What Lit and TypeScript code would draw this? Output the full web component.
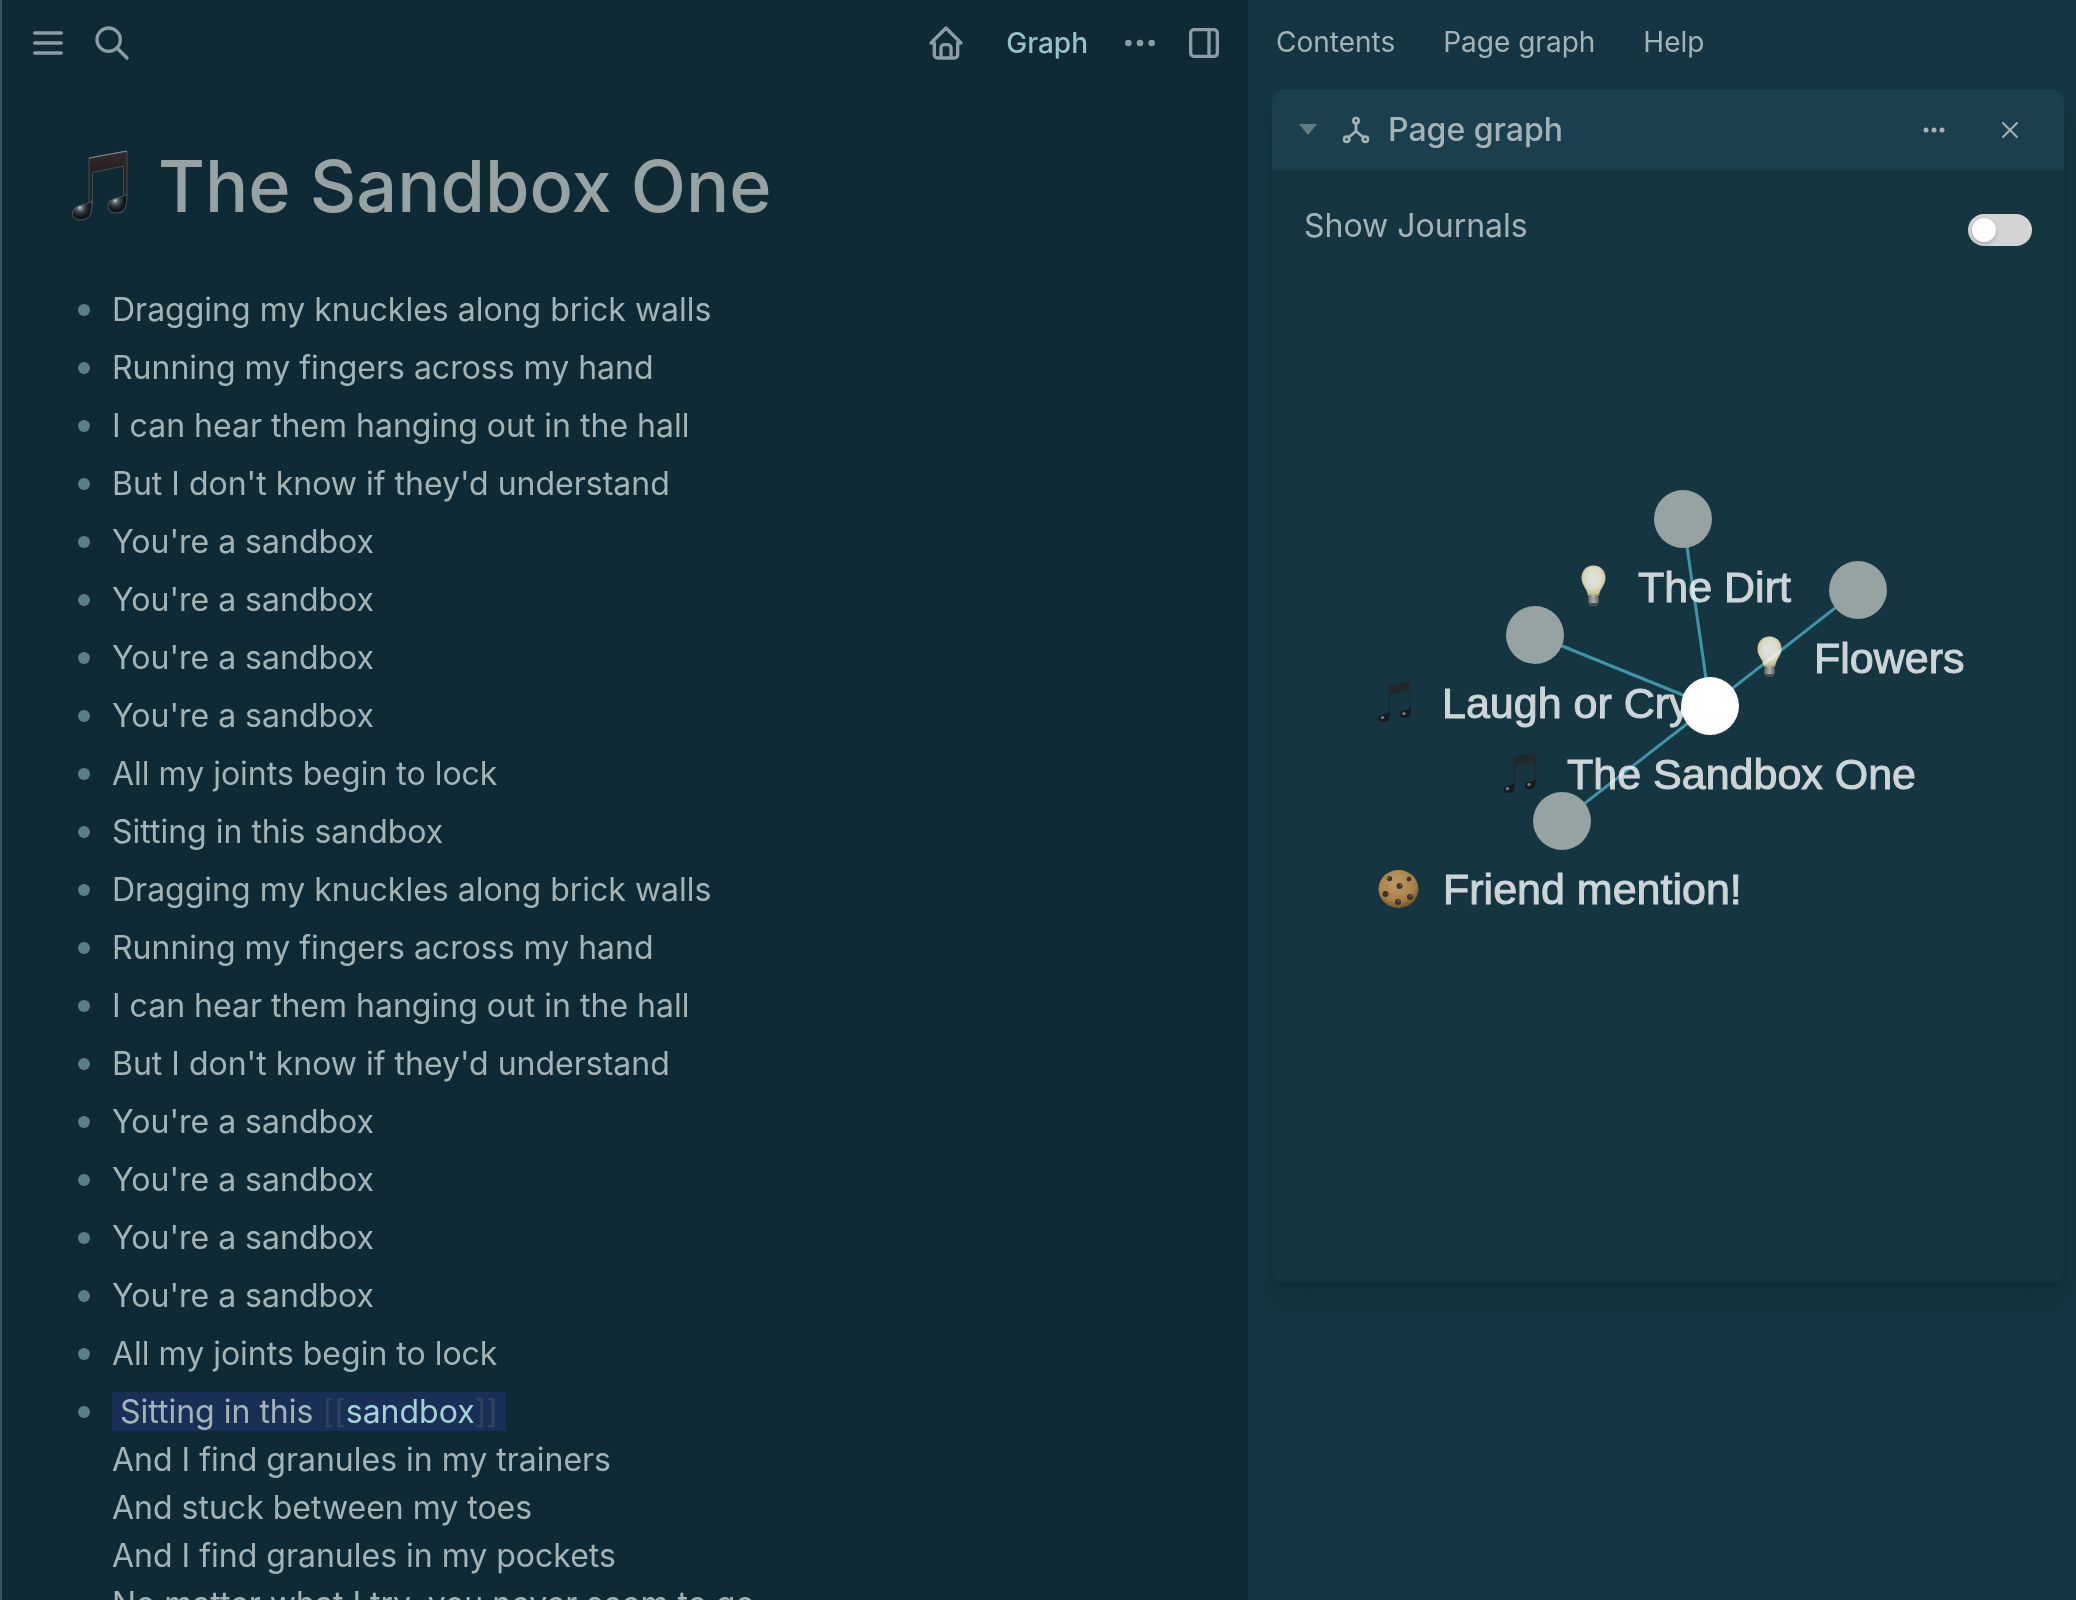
import { LitElement, html, svg, css } from "lit";
import { customElement } from "lit/decorators.js";

const VERSE = [
  "Dragging my knuckles along brick walls",
  "Running my fingers across my hand",
  "I can hear them hanging out in the hall",
  "But I don't know if they'd understand",
  "You're a sandbox",
  "You're a sandbox",
  "You're a sandbox",
  "You're a sandbox",
  "All my joints begin to lock",
];

const BLOCKS = [...VERSE, "Sitting in this sandbox", ...VERSE];

type Kind = "note" | "bulb" | "cookie";
interface GraphNode { x: number; y: number; label: string; textX: number; kind: Kind; current?: boolean }

/* Node centres and label starts, in graph-canvas units. */
const NODES: GraphNode[] = [
  { x: 411, y: 251, label: "The Dirt", textX: 366, kind: "bulb" },
  { x: 586, y: 322, label: "Flowers", textX: 542, kind: "bulb" },
  { x: 263, y: 367, label: "Laugh or Cry", textX: 170, kind: "note" },
  { x: 290, y: 553, label: "Friend mention!", textX: 171, kind: "cookie" },
  { x: 438, y: 438, label: "The Sandbox One", textX: 295, kind: "note", current: true },
];

const noteShape = () => svg`
  <defs>
    <linearGradient id="beam" x1="0" y1="0" x2="0" y2="1">
      <stop offset="0" stop-color="#382d2d"/><stop offset="0.3" stop-color="#2a2022"/><stop offset="1" stop-color="#262225"/>
    </linearGradient>
    <radialGradient id="head" cx="0.38" cy="0.35" r="0.7">
      <stop offset="0" stop-color="#d4dfe6"/><stop offset="0.16" stop-color="#6b7a84"/>
      <stop offset="0.45" stop-color="#2c333a"/><stop offset="0.75" stop-color="#121416"/><stop offset="1" stop-color="#1d2226"/>
    </radialGradient>
  </defs>
  <path d="M17 8 L55 1 V46 H51.500 V16 L20.500 22.500 V54 H17 Z" fill="url(#beam)" stroke="#43525c" stroke-width="0.900"/>
  <path d="M17 8 L55 1" stroke="#8a8a8d" stroke-width="1.200"/>
  <path d="M20 51 C20 66 17 70 8 70 C3 70 0.500 67 0.500 63 C0.500 54 14 56 20 51 Z" fill="url(#head)" stroke="#4d5c66" stroke-width="0.900"/>
  <path d="M55 44 C55 59 52 63 44 63 C39 63 36 60 36 56 C36 47 49 49 55 44 Z" fill="url(#head)" stroke="#4d5c66" stroke-width="0.900"/>`;

const smallNoteShape = () => svg`
  <path d="M10.500 5 L32.500 0.500 V28 H31 V9.500 L12 13.500 V33 H10.500 Z" fill="#22272b"/>
  <path d="M12 31 C12 39 10 41 5 41 C2 41 0.500 39.500 0.500 37.500 C0.500 33 8 34 12 31 Z" fill="#171b1e"/>
  <path d="M33 27 C33 35 31 37 26.500 37 C23.500 37 22 35.500 22 33.500 C22 29 29 30 33 27 Z" fill="#171b1e"/>
  <circle cx="4.500" cy="36.500" r="1.600" fill="#74838c"/><circle cx="26" cy="32.500" r="1.600" fill="#74838c"/>`;

const bulbShape = () => svg`
  <defs>
    <radialGradient id="glass" cx="0.5" cy="0.42" r="0.6">
      <stop offset="0" stop-color="#dde2e2"/><stop offset="0.55" stop-color="#dadcc9"/><stop offset="0.85" stop-color="#c9c48d"/><stop offset="1" stop-color="#a39d66"/>
    </radialGradient>
    <linearGradient id="cap" x1="0" x2="1">
      <stop offset="0" stop-color="#5f6668"/><stop offset="0.5" stop-color="#b0b4b5"/><stop offset="1" stop-color="#5a6164"/>
    </linearGradient>
  </defs>
  <path d="M12.500 0.500 C5 0.500 0.500 6 0.500 13 C0.500 20 6 23 7 31 H18 C19 23 24.500 20 24.500 13 C24.500 6 20 0.500 12.500 0.500 Z" fill="url(#glass)"/>
  <path d="M7.500 30.500 H17.500 V38 L15 41 H10 L7.500 38 Z" fill="url(#cap)"/>
  <path d="M8 38 H17 L15 41 H10 Z" fill="#4b4f50"/>
  <path d="M7.500 33.500 H17.500 M7.500 36 H17.500" stroke="#868c8e" stroke-width="0.700"/>`;

const cookieShape = () => svg`
  <defs>
    <radialGradient id="dough" cx="0.45" cy="0.35" r="0.65">
      <stop offset="0" stop-color="#bd9a66"/><stop offset="0.7" stop-color="#a98149"/><stop offset="1" stop-color="#76552a"/>
    </radialGradient>
  </defs>
  <ellipse cx="20.500" cy="19" rx="20" ry="19" fill="url(#dough)"/>
  <g fill="#3f302b">
    <circle cx="11.500" cy="8.500" r="2.600"/><circle cx="31" cy="9" r="2.400"/><circle cx="21.500" cy="16" r="3"/>
    <circle cx="7.500" cy="24" r="3"/><circle cx="32" cy="27" r="3"/><circle cx="20" cy="32" r="3"/>
  </g>
  <g fill="#76685f">
    <circle cx="10.500" cy="8" r="1"/><circle cx="22.500" cy="15" r="1"/><circle cx="32.500" cy="26" r="1"/><circle cx="20.500" cy="31" r="1"/>
  </g>`;

const emoji = (n: GraphNode) => {
  const y = n.y + 83;
  if (n.kind === "bulb") return svg`<g transform="translate(${n.textX - 57} ${y - 37})">${bulbShape()}</g>`;
  if (n.kind === "note") return svg`<g transform="translate(${n.textX - 64} ${y - 37})">${smallNoteShape()}</g>`;
  return svg`<g transform="translate(${n.textX - 65} ${y - 34})">${cookieShape()}</g>`;
};

@customElement("page-graph")
export class PageGraph extends LitElement {
  static styles = css`
    :host { display: block; }
    .canvas { display: block; width: 100%; height: auto; background: #153541; }
    .label { font-family: "Liberation Sans", Arial, sans-serif; font-size: 43px; fill: #cdd5d8; stroke: #cdd5d8; stroke-width: 1px; }
    .edge { stroke: #2e788a; stroke-width: 3px; mix-blend-mode: screen; }
    .node { fill: #97a3a3; }
    .current { fill: #ffffff; }
  `;

  render() {
    const hub = NODES[4];
    return html`
      <svg class="canvas" viewBox="0 0 792 1014" role="img" aria-label="Page graph">
        ${NODES.map((n) => svg`${emoji(n)}<text class="label" x=${n.textX} y=${n.y + 83}>${n.label}</text>`)}
        ${NODES.slice(0, 4).map((n) => svg`<line class="edge" x1=${n.x} y1=${n.y} x2=${hub.x} y2=${hub.y}></line>`)}
        ${NODES.map((n) => svg`<circle class="node ${n.current ? "current" : ""}" cx=${n.x} cy=${n.y} r="29"></circle>`)}
      </svg>`;
  }
}

@customElement("app-root")
export class AppRoot extends LitElement {
  static styles = css`
    :host {
      display: block;
      font-family: Inter, sans-serif;
      font-optical-sizing: none;
      color: #a4b3b5;
      background: #0f2a35;
    }
    * { box-sizing: border-box; }
    .app { display: grid; grid-template-columns: 104fr 69fr; height: 100vh; overflow: hidden; }
    .main { border-left: 2px solid #3c545d; overflow: hidden; }
    button { font: inherit; color: inherit; background: none; border: 0; padding: 0; margin: 0; cursor: pointer; }
    a { color: inherit; text-decoration: none; }
    .icon { display: block; fill: none; stroke: currentColor; stroke-width: 2; stroke-linecap: round; stroke-linejoin: round; }
    .toolbar { display: flex; align-items: center; justify-content: space-between; height: 86px; padding: 0 24px 0 26px; color: #8b9ca5; }
    .group { display: flex; align-items: center; gap: 24px; }
    .graph-link { font-size: 28px; line-height: 36px; font-weight: 500; color: #97c3c8; padding: 0 8px 0 16px; }
    .page { padding: 50px 48px 0 70px; }
    .title { display: flex; align-items: center; gap: 28px; margin: 0; font-size: 72px; line-height: 100px; font-weight: 500; color: #97a3a3; }
    .title-icon { display: block; flex: none; }
    .blocks { list-style: none; margin: 45px 0 0; padding: 0; font-size: 32px; line-height: 48px; }
    .block { display: grid; grid-template-columns: 40px 1fr; padding: 5px 0; }
    .dot { width: 12px; height: 12px; border-radius: 50%; background: #5c7f86; margin: 18px 0 0 6px; }
    .mark { background: #1a2f56; padding: 0 8px; color: #a4b3b5; }
    .bracket { color: #30425f; }
    .ref { color: #a3d2d6; }
    .side { background: #153542; padding: 0 12px 0 24px; }
    .tabs { display: flex; align-items: center; gap: 48px; height: 90px; padding-left: 4px; font-size: 28px; line-height: 36px; padding-bottom: 6px; }
    .card { border-radius: 12px; background: #153541; box-shadow: 0 20px 30px -6px rgba(10, 28, 36, 0.2), 0 8px 12px -6px rgba(10, 28, 36, 0.2); overflow: hidden; }
    .card-head { display: flex; align-items: center; height: 80px; padding: 0 40px 0 26px; background: #1c3f4e; }
    .card-title { flex: 1; margin: 0 0 0 16px; font-size: 32px; line-height: 40px; font-weight: 500; }
    .caret { margin-right: 22px; color: #5f7d84; }
    .caret-shape { display: block; fill: currentColor; }
    .close { margin-left: 48px; }
    .setting { display: flex; align-items: center; justify-content: space-between; height: 98px; padding: 14px 32px 0; font-size: 32px; line-height: 48px; }
    .toggle { appearance: none; width: 64px; height: 32px; margin: 8px 0 0; border-radius: 16px; background: #d4d4d4; display: flex; align-items: center; padding: 0 4px; cursor: pointer; }
    .toggle::before { content: ""; width: 24px; height: 24px; border-radius: 50%; background: #ffffff; box-shadow: 0 2px 4px rgba(0, 0, 0, 0.2); }
    .toggle:checked { justify-content: flex-end; background: #3f94a8; }
  `;

  render() {
    return html`
      <div class="app">
        <main class="main">
          <header class="toolbar">
            <div class="group">
              <button aria-label="Menu">
                <svg class="icon" width="40" height="40" viewBox="0 0 24 24"><path d="M4 6h16M4 12h16M4 18h16"/></svg>
              </button>
              <button aria-label="Search">
                <svg class="icon" width="40" height="40" viewBox="0 0 24 24"><circle cx="10" cy="10" r="7"/><path d="M21 21l-6-6"/></svg>
              </button>
            </div>
            <div class="group">
              <button aria-label="Home">
                <svg class="icon" width="40" height="40" viewBox="0 0 24 24"><path d="M5 12H3l9-9 9 9h-2M5 12v7a2 2 0 0 0 2 2h10a2 2 0 0 0 2-2v-7M9 21v-6a2 2 0 0 1 2-2h2a2 2 0 0 1 2 2v6"/></svg>
              </button>
              <a class="graph-link" href="#graph">Graph</a>
              <button aria-label="More">
                <svg class="icon" width="40" height="40" viewBox="0 0 24 24"><g fill="currentColor" stroke="none"><circle cx="5" cy="12" r="2"/><circle cx="12" cy="12" r="2"/><circle cx="19" cy="12" r="2"/></g></svg>
              </button>
              <button aria-label="Toggle right sidebar">
                <svg class="icon" width="40" height="40" viewBox="0 0 24 24"><rect x="4" y="4" width="16" height="16" rx="2"/><path d="M15 4v16"/></svg>
              </button>
            </div>
          </header>
          <article class="page">
            <h1 class="title">
              <svg class="title-icon" width="58" height="72" viewBox="0 0 58 72" aria-hidden="true">${noteShape()}</svg>
              The Sandbox One
            </h1>
            <ul class="blocks">
              ${BLOCKS.map((t) => html`<li class="block"><span class="dot"></span><span>${t}</span></li>`)}
              <li class="block">
                <span class="dot"></span>
                <div>
                  <mark class="mark">Sitting in this <span class="bracket">[[</span><a class="ref" href="#sandbox">sandbox</a><span class="bracket">]]</span></mark><br>
                  And I find granules in my trainers<br>
                  And stuck between my toes<br>
                  And I find granules in my pockets<br>
                  No matter what I try, you never seem to go
                </div>
              </li>
            </ul>
          </article>
        </main>
        <aside class="side">
          <nav class="tabs">
            <a href="#contents">Contents</a>
            <a href="#page-graph">Page graph</a>
            <a href="#help">Help</a>
          </nav>
          <section class="card">
            <header class="card-head">
              <button class="caret" aria-label="Collapse">
                <svg class="caret-shape" width="20" height="12" viewBox="0 0 20 12"><path d="M1 0H19L10 11Z"/></svg>
              </button>
              <svg class="icon" width="32" height="32" viewBox="0 0 24 24"><circle cx="12" cy="5" r="2"/><circle cx="5" cy="19" r="2"/><circle cx="19" cy="19" r="2"/><path d="M12 7v6M6.500 17.500L12 13l5.500 4.500"/></svg>
              <h2 class="card-title">Page graph</h2>
              <button aria-label="More options">
                <svg class="icon" width="28" height="28" viewBox="0 0 28 28"><g fill="currentColor" stroke="none"><circle cx="6" cy="14" r="2.500"/><circle cx="14" cy="14" r="2.500"/><circle cx="22" cy="14" r="2.500"/></g></svg>
              </button>
              <button class="close" aria-label="Close">
                <svg class="icon" width="28" height="28" viewBox="0 0 28 28"><path d="M7 7L21 21M21 7L7 21"/></svg>
              </button>
            </header>
            <div class="setting">
              <label for="journals">Show Journals</label>
              <input class="toggle" id="journals" type="checkbox" role="switch">
            </div>
            <page-graph></page-graph>
          </section>
        </aside>
      </div>`;
  }
}
